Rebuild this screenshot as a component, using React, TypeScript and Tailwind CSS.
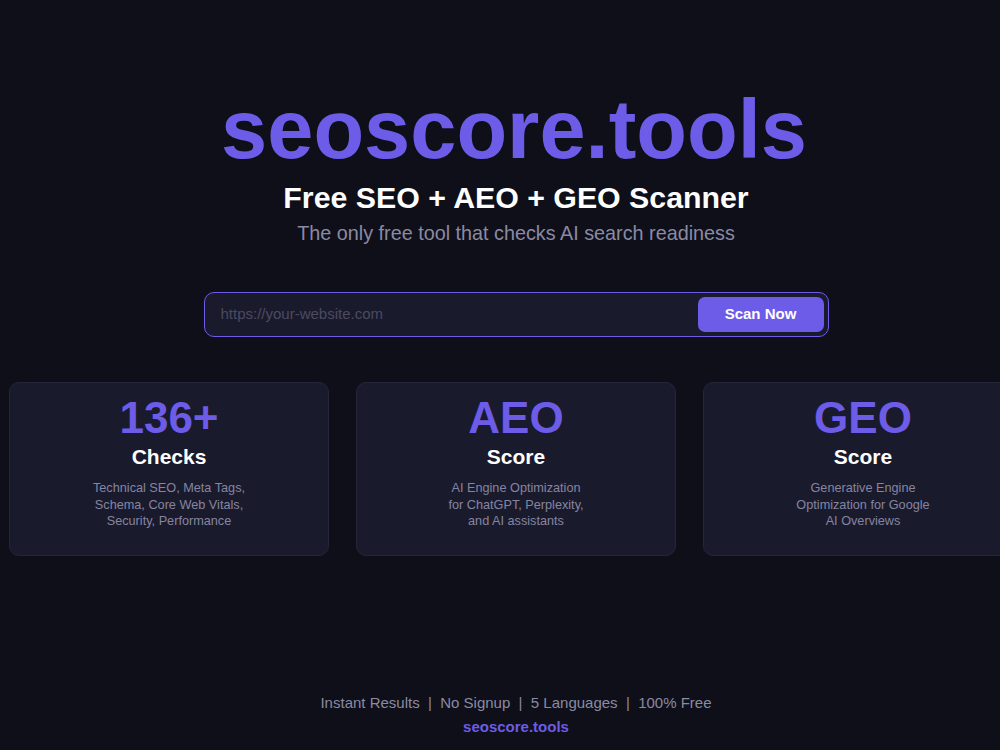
import React from "react";

type Feature = {
  value: string;
  label: string;
  lines: string[];
};

const features: Feature[] = [
  {
    value: "136+",
    label: "Checks",
    lines: ["Technical SEO, Meta Tags,", "Schema, Core Web Vitals,", "Security, Performance"],
  },
  {
    value: "AEO",
    label: "Score",
    lines: ["AI Engine Optimization", "for ChatGPT, Perplexity,", "and AI assistants"],
  },
  {
    value: "GEO",
    label: "Score",
    lines: ["Generative Engine", "Optimization for Google", "AI Overviews"],
  },
];

const FeatureCard = ({ value, label, lines }: Feature) => (
  <div className="w-[320px] h-[174px] shrink-0 rounded-[10px] border border-[#25253a] bg-[#1a1a2d] flex flex-col items-center pt-[13px]">
    <div className="text-[44px] leading-none font-bold text-[#6c5ce7]">{value}</div>
    <div className="mt-[6px] text-[21px] leading-none font-bold text-white">{label}</div>
    <div className="mt-[13px] text-[12.7px] leading-[16.5px] text-[#8585a0] text-center">
      {lines.map((l) => (
        <div key={l}>{l}</div>
      ))}
    </div>
  </div>
);

const App = () => {
  return (
    <div
      className="w-full h-[750px] overflow-hidden bg-[#0f0f1a]"
      style={{ fontFamily: '"Liberation Sans", Arial, sans-serif' }}
    >
      <div className="w-[1032px] h-full flex flex-col">
        <header className="flex flex-col items-center pt-[88px]">
          <h1 className="text-[83px] leading-none font-bold text-[#6c5ce7] -translate-x-[2px]">
            seoscore.tools
          </h1>
          <h2 className="mt-[12px] text-[30.3px] leading-none font-bold text-white">
            Free SEO + AEO + GEO Scanner
          </h2>
          <p className="mt-[11px] text-[19.8px] leading-none text-[#8a8aa3]">
            The only free tool that checks AI search readiness
          </p>
        </header>

        <div className="flex justify-center mt-[48px]">
          <form
            className="w-[625px] h-[45px] rounded-[10px] border border-[#6c5ce7] bg-[#1a1a2d] flex items-center pl-[16px] pr-[4px]"
            onSubmit={(e) => e.preventDefault()}
          >
            <input
              type="text"
              placeholder="https://your-website.com"
              className="flex-1 bg-transparent outline-none text-[15px] text-white placeholder:text-[#4b4b60]"
            />
            <button
              type="submit"
              className="w-[126px] h-[35px] rounded-[7px] bg-[#6c5ce7] text-white text-[15px] font-bold"
            >
              Scan Now
            </button>
          </form>
        </div>

        <div className="flex gap-[27px] pl-[9px] mt-[45px]">
          {features.map((f) => (
            <FeatureCard key={f.value} {...f} />
          ))}
        </div>

        <footer className="mt-auto pb-[16px] flex flex-col items-center">
          <div className="text-[15px] leading-none text-[#8a8aa3] whitespace-pre">
            {"Instant Results  |  No Signup  |  5 Languages  |  100% Free"}
          </div>
          <div className="mt-[9px] text-[15px] leading-none font-bold text-[#6c5ce7]">
            seoscore.tools
          </div>
        </footer>
      </div>
    </div>
  );
};

export default App;
